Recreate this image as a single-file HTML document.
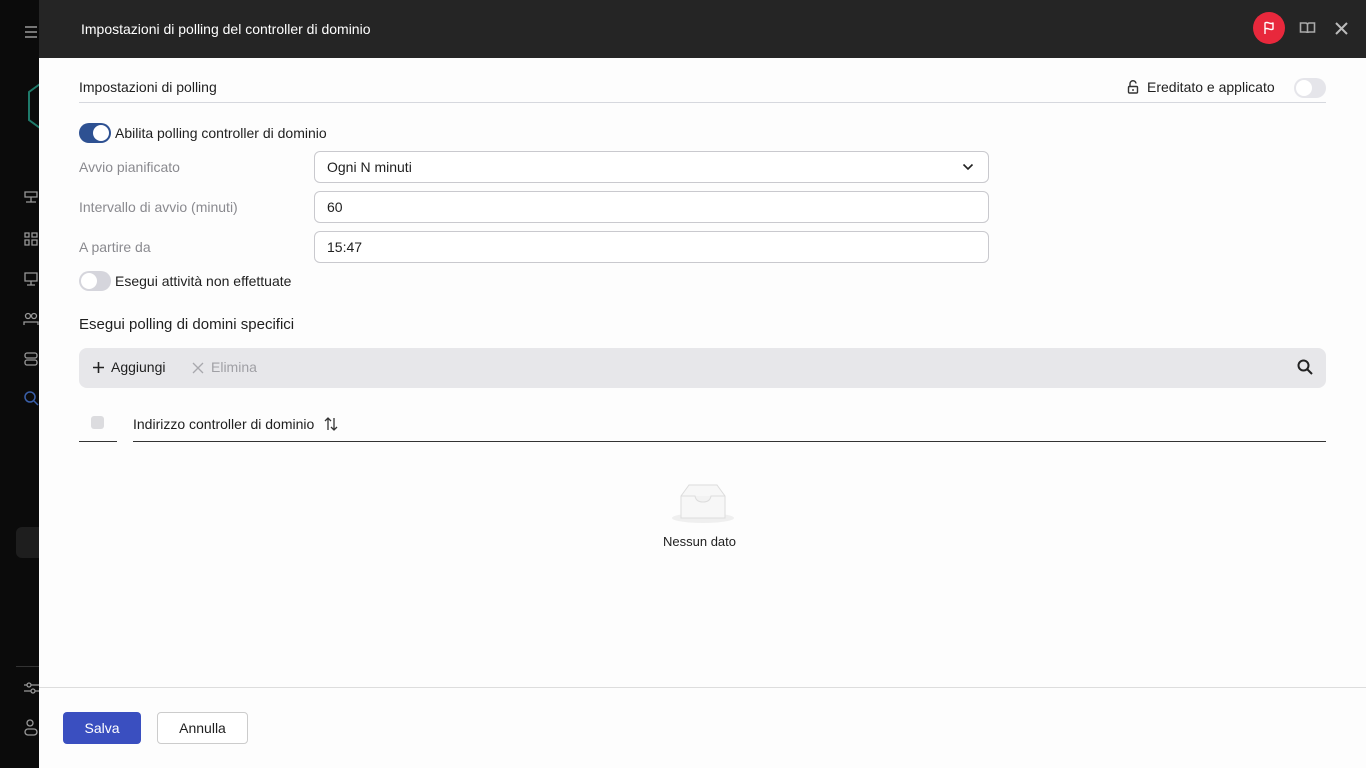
<!DOCTYPE html>
<html><head><meta charset="utf-8"><style>
*{box-sizing:border-box;margin:0;padding:0}
body{width:1366px;height:768px;overflow:hidden;font-family:"Liberation Sans",sans-serif;background:#0a0a0a;position:relative;color:#1f1f1f}
.side{position:absolute;left:0;top:0;width:39px;height:768px;background:#0b0b0b}
.side svg{position:absolute;left:23px}
.panel{position:absolute;left:39px;top:0;width:1327px;height:768px;background:#fdfdfd}
.head{height:58px;background:#252525;color:#fff;font-size:14px;padding:21px 0 0 42px}
.t{position:absolute;font-size:14px}
.lbl{color:#8a8a8f}
.inp{position:absolute;left:275px;width:675px;height:32px;border:1px solid #c9c9ce;border-radius:6px;background:#fff;font-size:14px;padding:7px 12px}
.tog{position:absolute;width:32px;height:20px;border-radius:10px}
.tog::after{content:"";position:absolute;top:2px;width:16px;height:16px;border-radius:50%;background:#fff}
.on{background:#2e5192}.on::after{left:14px}
.off{background:#d5d5dc}.off::after{left:2px}
svg{display:block}
</style></head><body>
<div class="side">
<svg style="top:25px" width="16" height="14" viewBox="0 0 16 14"><path d="M2 2H14M2 7H14M2 12H14" stroke="#999" stroke-width="1.5"/></svg>
<svg style="left:26px;top:82px" width="20" height="48" viewBox="0 0 20 48"><path d="M14 2L3 10V38L14 46" fill="none" stroke="#1f7a6a" stroke-width="2"/></svg>
<svg style="top:190px" width="16" height="14" viewBox="0 0 16 14"><path d="M2 2H14V7H2Z M8 7V12 M3 12H13" fill="none" stroke="#999" stroke-width="1.3"/></svg>
<svg style="top:231px" width="16" height="16" viewBox="0 0 16 16"><path d="M2 2H6V6H2Z M9 2H14V6H9Z M2 9H6V14H2Z M9 9H14V14H9Z" fill="none" stroke="#999" stroke-width="1.3"/></svg>
<svg style="top:271px" width="16" height="16" viewBox="0 0 16 16"><path d="M2 2H14V10H2Z M8 10V14 M4 14H12" fill="none" stroke="#999" stroke-width="1.3"/></svg>
<svg style="top:311px" width="16" height="16" viewBox="0 0 16 16"><circle cx="5" cy="5" r="2.5" fill="none" stroke="#999" stroke-width="1.3"/><circle cx="11" cy="5" r="2.5" fill="none" stroke="#999" stroke-width="1.3"/><path d="M1 14V11H15V14" fill="none" stroke="#999" stroke-width="1.3"/></svg>
<svg style="top:351px" width="16" height="16" viewBox="0 0 16 16"><rect x="2" y="2" width="12" height="5" rx="2" fill="none" stroke="#999" stroke-width="1.3"/><rect x="2" y="9" width="12" height="5" rx="2" fill="none" stroke="#999" stroke-width="1.3"/></svg>
<svg style="top:390px" width="16" height="16" viewBox="0 0 16 16"><circle cx="7" cy="7" r="5" fill="none" stroke="#3a5fa8" stroke-width="1.5"/><path d="M11 11L15 15" stroke="#3a5fa8" stroke-width="1.5"/></svg>
<div style="position:absolute;left:16px;top:527px;width:30px;height:31px;background:#1e1e1e;border-radius:6px"></div>
<div style="position:absolute;left:16px;top:666px;width:30px;border-top:1px solid #333"></div>
<svg style="top:680px" width="16" height="16" viewBox="0 0 16 16"><path d="M1 5H16M1 11H16" stroke="#999" stroke-width="1.3"/><circle cx="6" cy="5" r="2" fill="#0b0b0b" stroke="#999" stroke-width="1.3"/><circle cx="10" cy="11" r="2" fill="#0b0b0b" stroke="#999" stroke-width="1.3"/></svg>
<svg style="top:719px" width="16" height="18" viewBox="0 0 16 18"><circle cx="7" cy="4" r="3" fill="none" stroke="#999" stroke-width="1.3"/><rect x="2" y="10" width="12" height="6" rx="3" fill="none" stroke="#999" stroke-width="1.3"/></svg>
</div>
<div class="panel">
<div class="head">Impostazioni di polling del controller di dominio</div>
<div style="position:absolute;left:1214px;top:12px;width:32px;height:32px;border-radius:50%;background:#e8283c"></div>
<svg style="position:absolute;left:1222px;top:20px" width="16" height="16" viewBox="0 0 16 16"><path d="M4 14V3C7 1 9 5 12 3V9C9 11 7 7 4 9" fill="none" stroke="#fff" stroke-width="1.4" stroke-linejoin="round"/></svg>
<svg style="position:absolute;left:1260px;top:21px" width="17" height="14" viewBox="0 0 17 14"><path d="M1.5 2H6.5Q8.5 2 8.5 4V12Q8.5 11 6.5 11H1.5Z M15.5 2H10.5Q8.5 2 8.5 4V12Q8.5 11 10.5 11H15.5Z" fill="none" stroke="#aaa" stroke-width="1.6"/></svg>
<svg style="position:absolute;left:1296px;top:22px" width="13" height="13" viewBox="0 0 13 13"><path d="M1 1L12 12M12 1L1 12" stroke="#bbb" stroke-width="2"/></svg>
<div class="t" style="left:40px;top:79px">Impostazioni di polling</div>
<svg style="position:absolute;left:1088px;top:80px" width="12" height="14" viewBox="0 0 12 14"><path d="M3 6V4A3 3 0 0 1 9 3.5" fill="none" stroke="#333" stroke-width="1.4"/><rect x="1.5" y="6.5" width="9" height="6.5" rx="1" fill="none" stroke="#333" stroke-width="1.4"/><path d="M6 9V11" stroke="#333" stroke-width="1.4"/></svg>
<div class="t" style="left:1108px;top:79px">Ereditato e applicato</div>
<div class="tog off" style="left:1255px;top:78px;background:#e5e5ea"></div>
<div style="position:absolute;left:40px;top:102px;width:1247px;border-top:1px solid #d6d8de"></div>
<div class="tog on" style="left:40px;top:123px"></div>
<div class="t" style="left:76px;top:125px">Abilita polling controller di dominio</div>
<div class="t lbl" style="left:40px;top:159px">Avvio pianificato</div>
<div class="inp" style="top:151px">Ogni N minuti<svg style="position:absolute;right:14px;top:11px" width="12" height="8" viewBox="0 0 12 8"><path d="M1.5 1.5L6 6L10.5 1.5" fill="none" stroke="#222" stroke-width="1.6"/></svg></div>
<div class="t lbl" style="left:40px;top:199px">Intervallo di avvio (minuti)</div>
<div class="inp" style="top:191px">60</div>
<div class="t lbl" style="left:40px;top:239px">A partire da</div>
<div class="inp" style="top:231px">15:47</div>
<div class="tog off" style="left:40px;top:271px"></div>
<div class="t" style="left:76px;top:273px">Esegui attività non effettuate</div>
<div class="t" style="left:40px;top:316px;font-size:15px">Esegui polling di domini specifici</div>
<div style="position:absolute;left:40px;top:348px;width:1247px;height:40px;background:#e7e7ea;border-radius:8px"></div>
<svg style="position:absolute;left:53px;top:361px" width="13" height="13" viewBox="0 0 13 13"><path d="M6.5 1V12M1 6.5H12" stroke="#222" stroke-width="1.6"/></svg>
<div class="t" style="left:72px;top:359px">Aggiungi</div>
<svg style="position:absolute;left:153px;top:362px" width="12" height="12" viewBox="0 0 12 12"><path d="M1 1L11 11M11 1L1 11" stroke="#a8a8ad" stroke-width="1.3"/></svg>
<div class="t" style="left:172px;top:359px;color:#a0a0a5">Elimina</div>
<svg style="position:absolute;left:1258px;top:359px" width="16" height="16" viewBox="0 0 16 16"><circle cx="6.5" cy="6.5" r="5" fill="none" stroke="#222" stroke-width="2"/><path d="M10 10L15 15" stroke="#222" stroke-width="2"/></svg>
<div style="position:absolute;left:52px;top:416px;width:13px;height:13px;background:#dcdcdf;border-radius:3px"></div>
<div style="position:absolute;left:40px;top:441px;width:38px;border-top:1px solid #333"></div>
<div style="position:absolute;left:94px;top:441px;width:1193px;border-top:1px solid #333"></div>
<div class="t" style="left:94px;top:416px">Indirizzo controller di dominio</div>
<svg style="position:absolute;left:285px;top:417px" width="14" height="14" viewBox="0 0 14 14"><path d="M4 13V1M1 4L4 1L7 4M10 1V13M7 10L10 13L13 10" fill="none" stroke="#333" stroke-width="1.3"/></svg>
<svg style="position:absolute;left:632px;top:482px" width="64" height="42" viewBox="0 0 64 42"><ellipse cx="32" cy="36" rx="31" ry="5" fill="#efefef"/><path d="M10 14L18 3H46L54 14V36H10Z" fill="#f7f7f7" stroke="#dcdcdc"/><path d="M10 14H24Q25 20 32 20Q39 20 40 14H54" fill="#f2f2f2" stroke="#dcdcdc"/></svg>
<div class="t" style="left:624px;top:534px;font-size:13px">Nessun dato</div>
<div style="position:absolute;left:0;top:687px;width:1327px;border-top:1px solid #ddd"></div>
<div style="position:absolute;left:24px;top:712px;width:78px;height:32px;background:#3a4fc0;border-radius:4px;color:#fff;font-size:14px;text-align:center;line-height:32px">Salva</div>
<div style="position:absolute;left:118px;top:712px;width:91px;height:32px;border:1px solid #ccc;border-radius:4px;font-size:14px;text-align:center;line-height:30px;background:#fff">Annulla</div>
</div>
</body></html>
